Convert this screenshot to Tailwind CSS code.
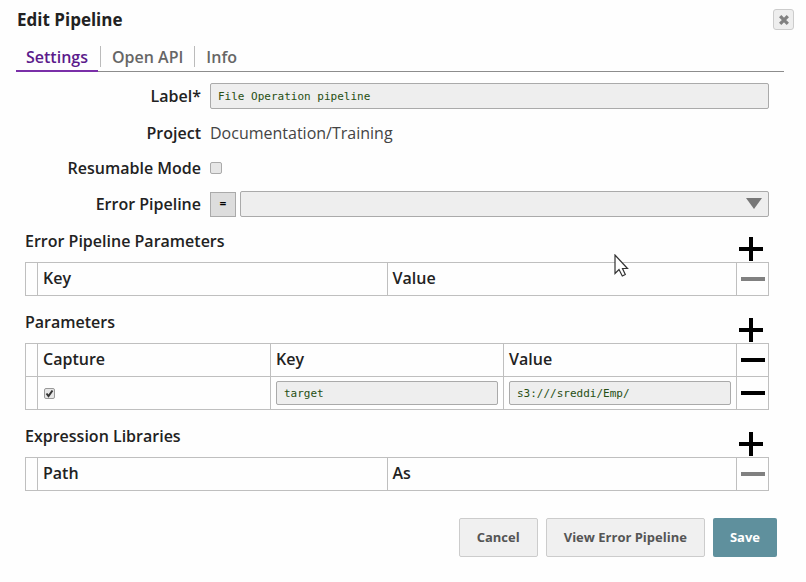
<!DOCTYPE html>
<html lang="en">
  <head>
    <meta charset="UTF-8" />
    <meta name="viewport" content="width=device-width, initial-scale=1.0" />
    <title>Edit Pipeline</title>
    <script src="https://cdn.jsdelivr.net/npm/@tailwindcss/browser@4"></script>
  </head>

  <body class="bg-[#fefefe]">
    <form class="font-['Open_Sans',sans-serif] text-base font-semibold text-[#222] pt-2">
      <header class="flex items-start justify-between pl-[17px] pr-3">
        <h1 class="text-[17px] leading-6 font-bold">Edit Pipeline</h1>
        <button type="button" aria-label="Close" class="mt-px flex size-[21px] items-center justify-center rounded-[3px] border border-[#ccc] bg-[#eee]">
          <svg class="size-[10px]" viewBox="0 0 11 11" fill="none" stroke="#808080" stroke-width="3.6">
            <path d="M1.3 1.3 9.7 9.7M9.7 1.3 1.3 9.7" />
          </svg>
        </button>
      </header>

      <nav class="mt-[14px] ml-4 mr-[22px] flex border-b border-[#8c8c8c] leading-[23px] text-[#666]">
        <a href="#settings" class="-mb-px border-b-2 border-[#7a2fa8] px-[10px] text-[#5b1a8b]">Settings</a>
        <a href="#api" class="mb-1 ml-[2px] border-l border-[#bbb] px-[11px] leading-5 pt-px">Open API</a>
        <a href="#info" class="mb-1 border-l border-[#bbb] px-[11px] leading-5 pt-px">Info</a>
      </nav>

      <main class="ml-[25px] mr-[37px]">
        <div class="mt-[11px] grid grid-cols-[176px_1fr] items-center gap-x-[9px]">
          <label for="label" class="text-right">Label*</label>
          <input id="label" type="text" value="File Operation pipeline" class="h-[26px] w-full border border-[#aaa] rounded-[2px] bg-[#eee] px-[7px] font-['DejaVu_Sans_Mono',monospace] text-[11px] font-normal text-[#274f13]" />

          <span class="mt-3 text-right leading-6">Project</span>
          <span class="mt-3 font-normal leading-6 text-[#444]">Documentation/Training</span>

          <label for="resumable" class="mt-[11px] text-right leading-6">Resumable Mode</label>
          <input id="resumable" type="checkbox" class="mt-[11px] size-3 appearance-none rounded-[2px] border border-[#aaa] bg-[#e6e6e6]" />

          <label for="errorPipeline" class="mt-[11px] text-right leading-6">Error Pipeline</label>
          <div class="mt-[11px] flex items-center gap-1">
            <button type="button" class="h-[25px] w-[26px] border border-[#aaa] bg-[#ddd] text-xs text-black">=</button>
            <div class="relative flex-1">
              <select id="errorPipeline" class="block h-[26px] w-full appearance-none rounded-[2px] border border-[#aaa] bg-[#eee]">
                <option></option>
              </select>
              <svg class="pointer-events-none absolute top-[7px] right-[7px] h-[11px] w-4" viewBox="0 0 16 11" fill="#777">
                <path d="M0 0h16L8 11z" />
              </svg>
            </div>
          </div>
        </div>

        <section class="mt-[-2px]">
          <div class="flex h-[47px] items-end justify-between">
            <h2 class="mb-[9px] leading-6">Error Pipeline Parameters</h2>
            <button type="button" aria-label="Add error pipeline parameter" class="mr-[6px] mb-px">
              <svg class="size-6" viewBox="0 0 24 24" stroke="#000" stroke-width="4"><path d="M0 12h24M12 0v24" /></svg>
            </button>
          </div>
          <table class="w-full table-fixed border-collapse text-left [&_th]:h-[33px] [&_th]:border [&_th]:border-[#bfbfbf] [&_th]:font-semibold">
            <colgroup><col class="w-[12px]" /><col /><col /><col class="w-8" /></colgroup>
            <tr>
              <th></th>
              <th class="pb-[2px] pl-[5px]">Key</th>
              <th class="pb-[2px] pl-[5px]">Value</th>
              <th>
                <button type="button" aria-label="Remove" class="ml-1 block">
                  <svg class="h-1 w-6" viewBox="0 0 24 4" fill="#808080"><path d="M0 0h24v4H0z" /></svg>
                </button>
              </th>
            </tr>
          </table>
        </section>

        <section>
          <div class="flex h-[47px] items-end justify-between">
            <h2 class="mb-[9px] leading-6">Parameters</h2>
            <button type="button" aria-label="Add parameter" class="mr-[6px] mb-px">
              <svg class="size-6" viewBox="0 0 24 24" stroke="#000" stroke-width="4"><path d="M0 12h24M12 0v24" /></svg>
            </button>
          </div>
          <table class="w-full table-fixed border-collapse text-left [&_td]:h-[33px] [&_td]:border [&_td]:border-[#bfbfbf] [&_th]:h-[33px] [&_th]:border [&_th]:border-[#bfbfbf] [&_th]:font-semibold">
            <colgroup><col class="w-[12px]" /><col /><col /><col /><col class="w-8" /></colgroup>
            <tr>
              <th></th>
              <th class="pb-[2px] pl-[5px]">Capture</th>
              <th class="pb-[2px] pl-[5px]">Key</th>
              <th class="pb-[2px] pl-[5px]">Value</th>
              <th>
                <button type="button" aria-label="Remove all" class="ml-1 block">
                  <svg class="h-1 w-6" viewBox="0 0 24 4"><path d="M0 0h24v4H0z" /></svg>
                </button>
              </th>
            </tr>
            <tr>
              <td></td>
              <td class="px-[6px]">
                <div class="relative size-[11px]">
                  <input type="checkbox" checked aria-label="Capture" class="block size-[11px] appearance-none rounded-[2px] border border-[#999] bg-[#e6e6e6]" />
                  <svg class="pointer-events-none absolute inset-0 size-[11px]" viewBox="0 0 11 11" fill="none" stroke="#333" stroke-width="2">
                    <path d="M2.5 5.5 4.5 8 8.500 2.5" />
                  </svg>
                </div>
              </td>
              <td class="px-[5px]">
                <input type="text" aria-label="Key" value="target" class="block h-6 w-full rounded-[2px] border border-[#aaa] bg-[#eee] px-[7px] font-['DejaVu_Sans_Mono',monospace] text-[11px] font-normal text-[#274f13]" />
              </td>
              <td class="px-[5px]">
                <input type="text" aria-label="Value" value="s3:///sreddi/Emp/" class="block h-6 w-full rounded-[2px] border border-[#aaa] bg-[#eee] px-[7px] font-['DejaVu_Sans_Mono',monospace] text-[11px] font-normal text-[#274f13]" />
              </td>
              <td>
                <button type="button" aria-label="Remove" class="ml-1 block">
                  <svg class="h-1 w-6" viewBox="0 0 24 4"><path d="M0 0h24v4H0z" /></svg>
                </button>
              </td>
            </tr>
          </table>
        </section>

        <section>
          <div class="flex h-[47px] items-end justify-between">
            <h2 class="mb-[9px] leading-6">Expression Libraries</h2>
            <button type="button" aria-label="Add library" class="mr-[6px] mb-px">
              <svg class="size-6" viewBox="0 0 24 24" stroke="#000" stroke-width="4"><path d="M0 12h24M12 0v24" /></svg>
            </button>
          </div>
          <table class="w-full table-fixed border-collapse text-left [&_th]:h-[33px] [&_th]:border [&_th]:border-[#bfbfbf] [&_th]:font-semibold">
            <colgroup><col class="w-[12px]" /><col /><col /><col class="w-8" /></colgroup>
            <tr>
              <th></th>
              <th class="pb-[2px] pl-[5px]">Path</th>
              <th class="pb-[2px] pl-[5px]">As</th>
              <th>
                <button type="button" aria-label="Remove" class="ml-1 block">
                  <svg class="h-1 w-6" viewBox="0 0 24 4" fill="#808080"><path d="M0 0h24v4H0z" /></svg>
                </button>
              </th>
            </tr>
          </table>
        </section>
      </main>

      <footer class="mt-[27px] mr-[29px] flex justify-end gap-2 text-[13px] font-bold text-[#555]">
        <button type="button" class="h-[39px] rounded-[2px] border border-[#ccc] bg-[#f0f0f0] px-[17px]">Cancel</button>
        <button type="button" class="h-[39px] rounded-[2px] border border-[#ccc] bg-[#f0f0f0] px-[17px]">View Error Pipeline</button>
        <button type="submit" class="h-[39px] rounded-[2px] bg-[#5f909d] px-[17px] text-white">Save</button>
      </footer>
    </form>

    <!-- mouse pointer -->
    <svg class="pointer-events-none absolute top-[254px] left-[614px] h-[23px] w-[15px]" viewBox="0 0 15 23" fill="#fff" stroke="#333" stroke-width="1.2">
      <path d="M1 1v18.500l4-4 3.300 6.500 3-1.500L8.500 14.500h5z" />
    </svg>
  </body>
</html>
